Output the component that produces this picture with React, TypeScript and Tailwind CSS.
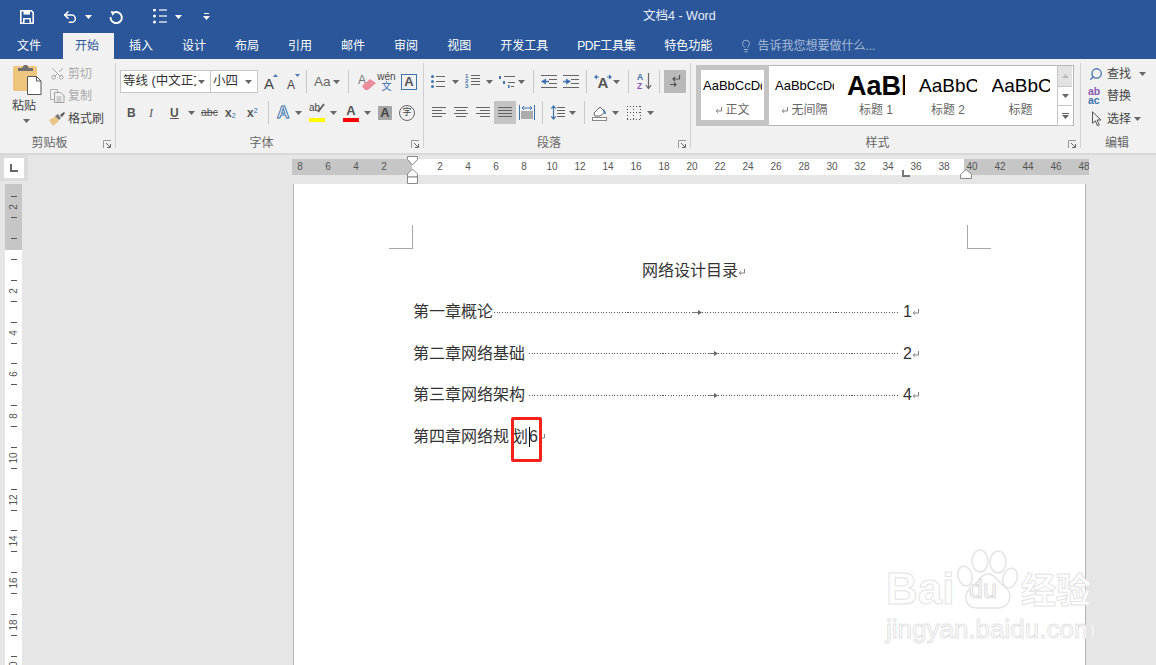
import { Lightbulb, Scissors, Undo2, Search } from 'lucide-react';
import type { ReactNode } from 'react';

const tabs = ['插入', '设计', '布局', '引用', '邮件', '审阅', '视图', '开发工具', 'PDF工具集', '特色功能'];
const hNums = ['8', '6', '4', '2', '', ...Array.from({ length: 24 }, (_, i) => String((i + 1) * 2))];

const toc = [
  { title: '第一章概论', before: 'w-[198px] ml-[1px]', page: '1' },
  { title: '第二章网络基础', before: 'w-[179px] ml-[4px]', page: '2' },
  { title: '第三章网络架构', before: 'w-[179px] ml-[4px]', page: '4' },
];

const Caret = ({ className = '', color = '#666' }: { className?: string; color?: string }) => (
  <svg width="7" height="4" viewBox="0 0 7 4" className={className}>
    <path d="M0 0h7L3.5 4z" fill={color} />
  </svg>
);

const Sep = ({ className = '' }: { className?: string }) => <div className={`w-px h-[23px] bg-[#c9c9c9] ${className}`} />;

// horizontal bars used by the paragraph buttons
const Bars = ({ rows, className = '', w = 14 }: { rows: [number, number][]; className?: string; w?: number }) => (
  <svg width={w} height="13" viewBox={`0 0 ${w} 13`} className={className}>
    {rows.map(([x, len], i) => (
      <rect key={i} x={x} y={1 + i * (rows.length > 4 ? 2.2 : 3)} width={len} height="1" fill="#666" />
    ))}
  </svg>
);

const ReturnMark = ({ className = '', color = '#808080' }: { className?: string; color?: string }) => (
  <svg width="8" height="8" viewBox="0 0 8 8" className={className}>
    <path d="M6.5 1v4H1.5M3.2 3.2 1.2 5l2 1.8" fill="none" stroke={color} strokeWidth="1" />
  </svg>
);

const Group = ({ label, className, labelClass = 'pr-[16px]', children, launcher = true }: { label: string; className: string; labelClass?: string; children: ReactNode; launcher?: boolean }) => (
  <div className={`relative flex flex-col shrink-0 h-[85px] ${className}`}>
    <div className="flex-1 min-h-0">{children}</div>
    <div className={`h-[12px] -mb-px leading-[12px] text-center text-[12px] text-[#666] ${labelClass}`}>{label}</div>
    {launcher && (
      <svg width="9" height="9" viewBox="0 0 9 9" className="absolute right-[3px] -bottom-px">
        <path d="M0.5 8V0.5H8" fill="none" stroke="#999" />
        <path d="M3 3l4 4M7.5 4v3.5H4" fill="none" stroke="#666" />
      </svg>
    )}
  </div>
);

const Leader = ({ className = '' }: { className?: string }) => (
  <div className={`h-px bg-[repeating-linear-gradient(90deg,#555_0_1px,transparent_1px_2.67px)] ${className}`} />
);

const TabArrow = () => (
  <svg width="10" height="7" viewBox="0 0 10 7" className="shrink-0">
    <path d="M0 3.5h7" stroke="#777" strokeWidth="1" />
    <path d="M6 1l4 2.5L6 6z" fill="#666" />
  </svg>
);

export default function App() {
  return (
    <div className="relative w-full h-screen overflow-hidden flex flex-col bg-[#e6e6e6] text-[#444] [font-family:'Liberation_Sans','Noto_Sans_CJK_SC',sans-serif]">
      {/* title bar */}
      <div className="h-[33px] shrink-0 bg-[#2b579a] flex items-center pl-[20px] text-white relative">
        <svg width="14" height="14" viewBox="0 0 14 14" className="shrink-0">
          <path d="M.8.8h10.6l1.8 1.8v10.6H.8z" fill="none" stroke="#fff" strokeWidth="1.6" />
          <rect x="3.5" y="1" width="6.5" height="3.6" fill="#fff" />
          <rect x="3" y="8" width="8" height="5" fill="#fff" />
          <rect x="4.6" y="9.4" width="4.8" height="3.6" fill="#2b579a" />
        </svg>
        <Undo2 size={16} strokeWidth={2.2} className="ml-[28px] shrink-0" />
        <Caret color="#fff" className="ml-[7px] shrink-0" />
        <svg width="14" height="14" viewBox="0 0 14 14" className="ml-[17px] shrink-0">
          <path d="M5 2.4A5.6 5.6 0 1 1 1.6 7" fill="none" stroke="#fff" strokeWidth="1.9" />
          <path d="M1.6 1l5.2 1-3.4 3.8z" fill="#fff" />
        </svg>
        <svg width="14" height="15" viewBox="0 0 14 15" className="ml-[30px] shrink-0">
          {[1, 7, 13].map((y) => (
            <g key={y}>
              <circle cx="1.5" cy={y} r="1.5" fill="#fff" />
              <rect x="6" y={y - 0.6} width="8" height="1.2" fill="#fff" />
            </g>
          ))}
        </svg>
        <Caret color="#fff" className="ml-[8px] shrink-0" />
        <svg width="7" height="8" viewBox="0 0 7 8" className="ml-[21px] shrink-0">
          <rect x="1" y="0" width="5" height="1" fill="#fff" />
          <path d="M0 3h7L3.5 7z" fill="#fff" />
        </svg>
        <div className="absolute left-[643px] top-[7px] text-[12.5px] leading-[18px] text-[#e9eef6] whitespace-nowrap">文档4 - Word</div>
      </div>

      {/* tabs */}
      <div className="h-[26px] shrink-0 bg-[#2b579a] flex items-stretch pl-[17px] text-[12px] text-white whitespace-nowrap">
        <div className="flex items-center">文件</div>
        <div className="flex items-center ml-[22px] pl-[12px] pr-[15px] bg-[#f1f1f1] text-[#2b579a]">开始</div>
        <div className="flex items-center gap-[29px] ml-[15px]">
          {tabs.map((t) => (
            <span key={t} className={t === 'PDF工具集' ? 'tracking-[-0.3px]' : ''}>{t}</span>
          ))}
          <span className="flex items-center text-[#a9bcd9]">
            <Lightbulb size={14} strokeWidth={1.5} className="mr-[4px] -ml-[2px]" />
            告诉我您想要做什么...
          </span>
        </div>
      </div>

      {/* ribbon */}
      <div className="h-[96px] shrink-0 bg-[#f1f1f1] border-b-2 border-[#d8d8d8] flex pt-[4px] text-[12px]">
        <Group label="剪贴板" className="w-[116px] border-r border-[#d0d0d0]">
          <div className="flex">
            <div className="w-[50px] shrink-0 flex flex-col items-start pl-[12px] text-[#444]">
              <svg width="30" height="33" viewBox="0 0 30 33" className="shrink-0 ml-[1px] -mt-[1px]">
                <rect x="0" y="4" width="24" height="25" rx="1.5" fill="#eec67f" />
                <path d="M5 9V6h4l2-3h3l2 3h4v3z" fill="#6f6f6f" />
                <path d="M14.5 14.5h9l4.5 4.5v13.5H14.5z" fill="#fff" stroke="#555" />
                <path d="M23.5 14.5V19H28" fill="none" stroke="#555" />
              </svg>
              <div className="mt-[3px] leading-[16px]">粘贴</div>
              <Caret className="ml-[11px] mt-[5px]" />
            </div>
            <div className="flex flex-col">
              <div className="h-[21px] flex items-center text-[#a8a8a8]">
                <Scissors size={15} strokeWidth={1.5} className="shrink-0 -rotate-90" />
                <span className="ml-[3px]">剪切</span>
              </div>
              <div className="h-[23px] flex items-center text-[#a8a8a8]">
                <svg width="15" height="14" viewBox="0 0 15 14" className="shrink-0">
                  <path d="M.5.5h7v10h-7z" fill="none" stroke="#b0b0b0" />
                  <path d="M4.5 3.5h6l3.5 3v7H4.500z" fill="#f1f1f1" stroke="#a0a0a0" />
                  <path d="M6.500 8h5M6.500 10h5M6.500 12h5" stroke="#a8a8a8" />
                </svg>
                <span className="ml-[3px]">复制</span>
              </div>
              <div className="h-[23px] flex items-center">
                <svg width="16" height="14" viewBox="0 0 16 14" className="shrink-0 -ml-[1px]">
                  <path d="M0 8l7-4 3 5-6 5z" fill="#e9c685" />
                  <path d="M6 4l3-2 3 4-2 2z" fill="#777" />
                  <path d="M11 3l4-3 1 1-3 4z" fill="#555" />
                </svg>
                <span className="ml-[3px]">格式刷</span>
              </div>
            </div>
          </div>
        </Group>

        <Group label="字体" className="w-[308px] border-r border-[#d0d0d0]">
          <div className="flex items-center h-[23px] mt-[7px] [&>*]:shrink-0">
            <div className="ml-[4px] w-[91px] h-[23px] bg-white border border-[#c6c6c6] flex items-center pl-[2px] pr-[5px]">
              <span className="flex-1 overflow-hidden whitespace-nowrap text-[12.5px] text-[#333]">等线 (中文正文)</span>
              <Caret className="shrink-0 ml-[2px]" />
            </div>
            <div className="-ml-px w-[48px] h-[23px] bg-white border border-[#c6c6c6] flex items-center justify-between pl-[2px] pr-[5px] text-[12.5px] text-[#333]">
              小四
              <Caret />
            </div>
            <div className="ml-[6px] w-[14px] relative h-[16px]">
              <span className="absolute left-0 bottom-[-1px] text-[15px] leading-[15px]">A</span>
              <svg width="5" height="3" viewBox="0 0 5 3" className="absolute right-0 top-0"><path d="M0 3h5L2.500 0z" fill="#4a7ab5" /></svg>
            </div>
            <div className="ml-[9px] w-[13px] relative h-[16px]">
              <span className="absolute left-0 bottom-[-1px] text-[12px] leading-[12px]">A</span>
              <svg width="5" height="3" viewBox="0 0 5 3" className="absolute right-0 top-0"><path d="M0 0h5L2.500 3z" fill="#4a7ab5" /></svg>
            </div>
            <Sep className="ml-[6px]" />
            <span className="ml-[7px] w-[17px] text-[13.5px] leading-[16px] text-[#666]">Aa</span>
            <Caret className="ml-[2px]" />
            <Sep className="ml-[8px]" />
            <div className="ml-[9px] w-[18px] h-[17px] relative">
              <span className="absolute left-0 top-[-2px] text-[12px] text-[#777]">A</span>
              <svg width="14" height="11" viewBox="0 0 14 11" className="absolute right-0 bottom-0"><path d="M0 7l8-7 6 4-8 7H3z" fill="#ec8d9e" /></svg>
            </div>
            <div className="ml-[3px] w-[15px] flex flex-col items-center leading-[9px]">
              <span className="text-[10px] leading-[10px] text-[#444]">wén</span>
              <span className="text-[10px] leading-[10px] text-[#2f6ab0]">文</span>
            </div>
            <div className="ml-[7px] w-[16px] h-[16px] border border-[#3f74ae] flex items-center justify-center font-bold text-[13px] text-[#555]">A</div>
          </div>
          <div className="flex items-center h-[23px] mt-[8px] [&>*]:shrink-0 text-[#555]">
            <span className="ml-[11px] w-[8px] font-bold text-[12px] leading-none">B</span>
            <span className="ml-[14px] w-[8px] italic text-[12px] leading-none [font-family:'Liberation_Serif',serif]">I</span>
            <span className="ml-[13px] w-[9px] underline text-[12px] leading-none font-bold">U</span>
            <Caret className="ml-[9px]" />
            <span className="ml-[6px] w-[17px] text-[10.5px] leading-none line-through">abc</span>
            <span className="ml-[7px] w-[14px] font-bold text-[12px] leading-none">x<sub className="text-[7px] font-normal text-[#2f6ab0]">2</sub></span>
            <span className="ml-[8px] w-[14px] font-bold text-[12px] leading-none">x<sup className="text-[7px] font-normal text-[#2f6ab0]">2</sup></span>
            <Sep className="ml-[7px]" />
            <span className="ml-[8px] w-[14px] font-bold text-[17px] leading-none text-white [-webkit-text-stroke:1px_#3f74ae]">A</span>
            <Caret className="ml-[4px]" />
            <div className="ml-[7px] w-[16px] flex flex-col h-[19px] relative">
              <span className="text-[10px] leading-[10px] text-[#444]">ab</span>
              <svg width="8" height="10" viewBox="0 0 8 10" className="absolute right-0 top-0"><path d="M1 9l6-8" stroke="#666" strokeWidth="2" /></svg>
              <div className="absolute left-0 right-0 bottom-0 h-[4px] bg-[#ffff00]" />
            </div>
            <Caret className="ml-[5px]" />
            <div className="ml-[6px] w-[16px] h-[19px] flex flex-col items-center">
              <span className="text-[13px] leading-[15px] font-semibold text-[#555]">A</span>
              <div className="w-full h-[4px] bg-[#ff0000]" />
            </div>
            <Caret className="ml-[5px]" />
            <div className="ml-[7px] w-[14px] h-[14px] bg-[#a6a6a6] flex items-center justify-center font-bold text-[13px] text-[#444]">A</div>
            <div className="ml-[7px] w-[16px] h-[16px] rounded-full border border-[#666] flex items-center justify-center text-[9px] leading-none text-[#444]">字</div>
          </div>
        </Group>

        <Group label="段落" className="w-[267px] border-r border-[#d0d0d0]">
          <div className="flex items-center h-[23px] mt-[7px] [&>*]:shrink-0">
            <svg width="14" height="13" viewBox="0 0 14 13" className="ml-[7px]">
              {[1.5, 6.5, 11.5].map((y) => (
                <g key={y}><circle cx="1.500" cy={y} r="1.500" fill="#3f74ae" /><rect x="5" y={y - 0.5} width="9" height="1" fill="#666" /></g>
              ))}
            </svg>
            <Caret className="ml-[7px]" />
            <div className="ml-[6px] w-[15px] flex">
              <span className="w-[6px] text-[6px] leading-[5px] font-bold text-[#3f74ae]">1<br />2<br />3</span>
              <Bars w={9} rows={[[0, 9], [0, 9], [0, 9], [0, 9]]} />
            </div>
            <Caret className="ml-[6px]" />
            <svg width="16" height="13" viewBox="0 0 16 13" className="ml-[6px]">
              <rect x="0" y="1" width="2" height="3" fill="#3f74ae" /><rect x="5" y="1" width="11" height="1" fill="#666" />
              <rect x="4" y="6" width="2" height="3" fill="#3f74ae" /><rect x="9" y="7" width="7" height="1" fill="#666" />
              <rect x="9" y="10" width="1.500" height="3" fill="#3f74ae" /><rect x="12" y="11" width="3" height="1" fill="#666" />
            </svg>
            <Caret className="ml-[3px]" />
            <Sep className="ml-[8px]" />
            <svg width="16" height="13" viewBox="0 0 16 13" className="ml-[7px]">
              <path d="M5 3.500v6L0 6.500z" fill="#3f74ae" /><rect x="3" y="5.800" width="5" height="1.500" fill="#3f74ae" />
              <rect y="0" width="16" height="1" fill="#666" /><rect x="8" y="4" width="8" height="1" fill="#666" /><rect x="8" y="8" width="8" height="1" fill="#666" /><rect y="12" width="16" height="1" fill="#666" />
            </svg>
            <svg width="16" height="13" viewBox="0 0 16 13" className="ml-[6px]">
              <path d="M3 3.500v6l5-3z" fill="#3f74ae" /><rect x="0" y="5.800" width="5" height="1.500" fill="#3f74ae" />
              <rect y="0" width="16" height="1" fill="#666" /><rect x="8" y="4" width="8" height="1" fill="#666" /><rect x="8" y="8" width="8" height="1" fill="#666" /><rect y="12" width="16" height="1" fill="#666" />
            </svg>
            <Sep className="ml-[7px]" />
            <div className="ml-[7px] w-[18px] h-[16px] relative flex justify-center items-end">
              <span className="font-bold text-[15px] leading-[14px] text-[#555]">A</span>
              <svg width="18" height="6" viewBox="0 0 18 6" className="absolute left-0 top-0">
                <path d="M0 3l3-2.500v5zM18 3l-3-2.500v5z" fill="#3f74ae" /><path d="M2 3h3M13 3h3" stroke="#3f74ae" />
              </svg>
            </div>
            <Caret className="ml-[1px]" />
            <Sep className="ml-[8px]" />
            <div className="ml-[8px] w-[15px] h-[17px] flex">
              <span className="w-[8px] text-[8.500px] leading-[8.500px] font-bold"><span className="text-[#3f74ae]">A</span><br /><span className="text-[#8a5bb5]">Z</span></span>
              <svg width="7" height="17" viewBox="0 0 7 17"><path d="M3.500 0v15M.8 12l2.700 3.500L6.200 12" fill="none" stroke="#666" strokeWidth="1.200" /></svg>
            </div>
            <Sep className="ml-[7px]" />
            <div className="ml-[4px] w-[22px] h-[23px] bg-[#b9b9b9] flex items-center justify-center">
              <svg width="11" height="13" viewBox="0 0 11 13">
                <path d="M9.500 0v4H3M5 2 3 4l2 2" fill="none" stroke="#555" strokeWidth="1.200" />
                <path d="M0 9.500h6M4 7.500l2 2-2 2" fill="none" stroke="#555" strokeWidth="1.200" />
              </svg>
            </div>
          </div>
          <div className="flex items-center h-[23px] mt-[8px] [&>*]:shrink-0">
            <Bars className="ml-[8px]" rows={[[0, 14], [0, 10], [0, 14], [0, 10]]} />
            <Bars className="ml-[8px]" rows={[[0, 14], [2, 10], [0, 14], [2, 10]]} />
            <Bars className="ml-[8px]" rows={[[0, 14], [4, 10], [0, 14], [4, 10]]} />
            <div className="ml-[4px] w-[22px] h-[23px] bg-[#c4c4c4] flex items-center justify-center">
              <Bars rows={[[0, 14], [0, 14], [0, 14], [0, 14]]} />
            </div>
            <svg width="16" height="15" viewBox="0 0 16 15" className="ml-[3px]">
              <rect x="0" y="0" width="1" height="15" fill="#3f74ae" /><rect x="15" y="0" width="1" height="15" fill="#3f74ae" />
              <path d="M3 3h10M5 1 3 3l2 2M11 1l2 2-2 2" fill="none" stroke="#3f74ae" />
              <path d="M2 7h12M2 9h12M2 11h12M2 13h12" stroke="#666" />
            </svg>
            <Sep className="ml-[7px]" />
            <div className="ml-[8px] w-[14px] flex items-center">
              <svg width="5" height="15" viewBox="0 0 5 15"><path d="M2.500 1v13M.3 3.500 2.500 1l2.200 2.500M.3 11.500 2.500 14l2.200-2.500" fill="none" stroke="#3f74ae" strokeWidth="1.200" /></svg>
              <Bars w={8} className="ml-[1px]" rows={[[0, 8], [0, 8], [0, 8], [0, 8]]} />
            </div>
            <Caret className="ml-[4px]" />
            <Sep className="ml-[8px]" />
            <svg width="16" height="16" viewBox="0 0 16 16" className="ml-[7px]">
              <path d="M2 8l6-6 5 5-5 4H3z" fill="#fff" stroke="#666" />
              <path d="M11 4c2 1 3 3 3 5-2 0-3-2-3-5z" fill="#3f74ae" />
              <rect x="0.500" y="12.500" width="14" height="3" fill="#fff" stroke="#888" />
            </svg>
            <Caret className="ml-[4px]" />
            {/* dotted grid: one pixel on, two off */}
            <svg width="14" height="14" viewBox="0 0 14 14" className="ml-[8px]" shapeRendering="crispEdges">
              <path d="M.5 0v14M6.500 0v14M13.500 0v14M0 .5h14M0 6.500h14M0 13.500h14" fill="none" stroke="#555" strokeDasharray="1 2" />
            </svg>
            <Caret className="ml-[6px]" />
          </div>
        </Group>

        <Group label="样式" className="w-[390px] border-r border-[#d0d0d0]">
          <div className="ml-[5px] mt-[2px] w-[378px] h-[61px] flex border border-[#b5b5b5] bg-white">
            <div className="w-[73px] -ml-px -my-px border-[5px] border-b-[6px] border-[#c4c4c4] flex flex-col items-center overflow-hidden shrink-0">
              <div className="w-[59px] overflow-hidden whitespace-nowrap text-[13px] leading-[32px] text-black">AaBbCcDd</div>
              <div className="flex items-center text-[#666] leading-[16px]"><ReturnMark className="mr-[2px]" />正文</div>
            </div>
            <div className="w-[71px] shrink-0 flex flex-col items-center">
              <div className="w-[59px] overflow-hidden whitespace-nowrap text-[13px] leading-[40px] h-[36px] text-black">AaBbCcDd</div>
              <div className="flex items-center text-[#666] leading-[16px]"><ReturnMark className="mr-[2px]" />无间隔</div>
            </div>
            <div className="w-[72px] shrink-0 flex flex-col items-center">
              <div className="w-[58px] overflow-hidden whitespace-nowrap font-bold text-[27px] leading-[40px] h-[36px] text-black">AaBbC</div>
              <div className="text-[#666] leading-[16px]">标题 1</div>
            </div>
            <div className="w-[72px] shrink-0 flex flex-col items-center">
              <div className="w-[58px] overflow-hidden whitespace-nowrap text-[19px] leading-[40px] h-[36px] text-black">AaBbCc</div>
              <div className="text-[#666] leading-[16px]">标题 2</div>
            </div>
            <div className="w-[73px] shrink-0 flex flex-col items-center">
              <div className="w-[58px] overflow-hidden whitespace-nowrap text-[19px] leading-[40px] h-[36px] text-black">AaBbCc</div>
              <div className="text-[#666] leading-[16px]">标题</div>
            </div>
            <div className="w-[15px] shrink-0 flex flex-col border-l border-[#c6c6c6] -my-px">
              <div className="h-[21px] bg-[#e2e2e2] border-t border-[#b5b5b5] flex items-center justify-center"><Caret color="#bbb" className="rotate-180" /></div>
              <div className="h-[19px] bg-white border-t border-[#c6c6c6] flex items-center justify-center"><Caret /></div>
              <div className="h-[21px] bg-white border-y border-[#c6c6c6] flex flex-col items-center justify-center">
                <div className="w-[7px] h-px bg-[#666] mb-[1px]" />
                <Caret />
              </div>
            </div>
          </div>
        </Group>

        <Group label="编辑" className="w-[75px]" labelClass="pr-[3px]" launcher={false}>
          <div className="pl-[8px] flex flex-col whitespace-nowrap">
            <div className="h-[21px] flex items-center">
              <Search size={14} strokeWidth={2.2} className="shrink-0 -scale-x-100 text-[#3f74ae]" />
              <span className="ml-[4px]">查找</span>
              <Caret className="ml-[8px] shrink-0" />
            </div>
            <div className="h-[23px] flex items-center">
              <span className="w-[16px] -ml-px text-[10.5px] leading-[9px] font-bold text-[#3f74ae] shrink-0">
                <span className="text-[#8a5bb5]">ab</span><br />ac
              </span>
              <span className="ml-[3px]">替换</span>
            </div>
            <div className="h-[23px] flex items-center">
              <svg width="14" height="16" viewBox="0 0 14 16" className="shrink-0">
                <path d="M3.500.8v11.500l2.800-2.500 2.200 5 1.800-.8-2.200-5h3.900z" fill="#f1f1f1" stroke="#555" />
              </svg>
              <span className="ml-[4px]">选择</span>
              <Caret className="ml-[3px] shrink-0" />
            </div>
          </div>
        </Group>
      </div>

      {/* workspace */}
      <div className="flex-1 min-h-0 flex">
        <div className="w-[28px] shrink-0 flex flex-col">
          <div className="h-[26px] bg-[#dcdcdc] pt-[3px] pl-[4px]">
            <div className="w-[20px] h-[20px] bg-white flex items-center justify-center">
              <svg width="8" height="8" viewBox="0 0 8 8"><path d="M1 0v7h7" fill="none" stroke="#666" strokeWidth="2" /></svg>
            </div>
          </div>
          {/* vertical ruler: 10.45px per half unit */}
          <div className="ml-[5px] mt-[3px] w-[17px] flex-1 pt-[7.7px] overflow-hidden bg-[linear-gradient(#c6c6c6_66px,#fff_66px)]">
            {Array.from({ length: 46 }, (_, i) => {
              const row = i - 6;
              const mod = ((row % 4) + 4) % 4;
              return (
                <div key={i} className="h-[10.45px] flex items-center justify-center">
                  {mod % 2 === 0 && <div className="w-[6px] h-px bg-[#555]" />}
                  {mod === 3 && (
                    <span className="-rotate-90 text-[10px] leading-none text-[#555] whitespace-nowrap">{(row + 1) / 2 === 0 ? '' : Math.abs((row + 1) / 2)}</span>
                  )}
                </div>
              );
            })}
          </div>
        </div>

        <div className="flex-1 min-w-0 relative flex flex-col">
          {/* horizontal ruler */}
          <div className="h-[29px] shrink-0 pt-[4px] pl-[264px]">
            <div className="w-[797px] h-[16px] flex overflow-hidden bg-[linear-gradient(90deg,#c6c6c6_120px,#fff_120px,#fff_672px,#c6c6c6_672px)]">
              <div className="flex shrink-0 -ml-[6px]">
                {hNums.map((n, i) => (
                  <span key={i} className="w-[28px] shrink-0 text-center text-[10px] leading-[16px] text-[#555]">{n}</span>
                ))}
              </div>
            </div>
          </div>
          <svg width="12" height="28" viewBox="0 0 12 28" className="absolute left-[379px] top-[1px]">
            <path d="M.5.500h10v3L5.500 9 .5 3.500z" fill="#fff" stroke="#888" />
            <path d="M5.500 13l5 5v3H.5v-3z" fill="#fff" stroke="#888" />
            <path d="M.5 21h10v6.500H.5z" fill="#fff" stroke="#888" />
          </svg>
          <svg width="8" height="7" viewBox="0 0 8 7" className="absolute left-[874px] top-[15px]"><path d="M1 0v6h7" fill="none" stroke="#777" strokeWidth="2" /></svg>
          <svg width="12" height="10" viewBox="0 0 12 10" className="absolute left-[932px] top-[14px]"><path d="M6 .5l5.500 5v4H.5v-4z" fill="#fff" stroke="#888" /></svg>

          {/* page */}
          <div className="relative ml-[265px] w-[793px] flex-1 bg-white border-x border-[#b5b5b5] pt-[66px] pl-[119px] text-[16px] text-[#333]">
            <div className="absolute left-[95px] top-[41px] w-[24px] h-[24px] border-r border-b border-[#a8a8a8]" />
            <div className="absolute left-[673px] top-[41px] w-[24px] h-[24px] border-l border-b border-[#a8a8a8]" />

            <div className="h-[41.5px] flex items-center pl-[229px]">
              网络设计目录
              <ReturnMark className="mt-[2px]" />
            </div>
            {toc.map((row) => (
              <div key={row.title} className="h-[41.5px] w-[507px] flex items-center">
                <span className="shrink-0">{row.title}</span>
                <Leader className={`shrink-0 ${row.before}`} />
                <TabArrow />
                <Leader className="flex-1" />
                <span className="shrink-0 w-[9px] ml-[4px]">{row.page}</span>
                <ReturnMark className="shrink-0" />
              </div>
            ))}
            <div className="h-[41.5px] flex items-center">
              <span>第四章网络规</span>
              <span className="ml-[3px]">划</span>
              <div className="w-px h-[20px] bg-black ml-[1px]" />
              <span className="-ml-px">6</span>
              <ReturnMark />
            </div>

            <div className="absolute left-[217px] top-[233px] w-[31px] h-[45px] border-[3px] border-[#f5211b] rounded-[2px]" />
          </div>
        </div>
      </div>

      {/* watermark */}
      <div className="absolute left-[886px] top-[540px] flex flex-col text-white [-webkit-text-stroke:1px_#e4e4e4]">
        <div className="relative h-[75px] w-[206px]">
          <span className="absolute left-0 top-[27px] font-bold text-[44px] leading-[44px]">Bai</span>
          <svg width="68" height="68" viewBox="0 0 68 68" className="absolute left-[68px] top-[4px]" fill="none" stroke="#e4e4e4" strokeWidth="1.500">
            <ellipse cx="26" cy="17" rx="8" ry="11" />
            <ellipse cx="44" cy="18" rx="8" ry="11" />
            <ellipse cx="11" cy="32" rx="7" ry="10" transform="rotate(-15 11 32)" />
            <ellipse cx="56" cy="34" rx="7" ry="10" transform="rotate(15 56 34)" />
            <path d="M34 30c8 0 9 8 17 13 8 6 6 20-6 21H22C10 63 9 49 17 44c7-4 9-14 17-14z" />
          </svg>
          <span className="absolute left-[83px] top-[37px] text-[25px] leading-[25px] [-webkit-text-stroke:1px_#dcdcdc]">du</span>
          <span className="absolute left-[135px] top-[32px] font-bold text-[35px] leading-[38px]">经验</span>
        </div>
        <span className="text-[26px] leading-[28px] whitespace-nowrap">jingyan.baidu.com</span>
      </div>
    </div>
  );
}
